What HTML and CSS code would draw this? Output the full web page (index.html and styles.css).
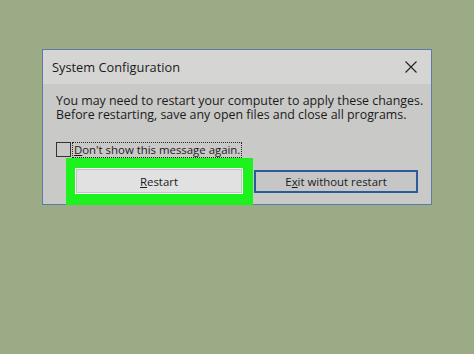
FILE: index.html
```html
<!DOCTYPE html>
<html lang="en">

<head>
    <meta charset="UTF-8">
    <meta name="viewport" content="width=device-width, initial-scale=1.0">
    <title>System Configuration</title>
    <link rel="stylesheet" href="styles.css">
</head>

<body>
    <div class="dialog">
        <div class="titlebar">
            <span class="title">System Configuration</span>
            <svg class="close" width="12" height="12" viewBox="0 0 12 12">
                <path d="M0.5 0.5 L11.5 11.5 M11.5 0.5 L0.5 11.5" stroke="#222" stroke-width="1.1" fill="none" />
            </svg>
        </div>

        <div class="content">
            <p class="message">You may need to restart your computer to apply these changes.</p>
            <p class="message">Before restarting, save any open files and close all programs.</p>

            <label class="check-row">
                <span class="checkbox"></span>
                <span class="check-label"><u>D</u>on't show this message again.</span>
            </label>

            <div class="buttons">
                <div class="highlight">
                    <button class="btn btn-primary"><u>R</u>estart</button>
                </div>
                <button class="btn btn-focus">E<u>x</u>it without restart</button>
            </div>
        </div>
    </div>
</body>

</html>
```

FILE: styles.css
```css
body {
    margin: 0;
    background-color: #9bab86;
    font-family: 'Open Sans', 'Noto Sans', sans-serif;
    color: #1b1b1b;
}

.dialog {
    width: 388px;
    height: 154px;
    margin: 49px 0 0 42px;
    border: 1px solid #5b7cab;
    background-color: #c9c9c7;
    display: flex;
    flex-direction: column;
}

.titlebar {
    height: 34px;
    flex-shrink: 0;
    background-color: #d5d5d3;
    display: flex;
    align-items: center;
    justify-content: space-between;
    padding: 0 14px 0 9px;
}

.title {
    font-size: 12.8px;
}

.close {
    display: block;
}

.content {
    flex: 1;
    min-height: 0;
    padding: 10px 13px 0 13px;
    display: flex;
    flex-direction: column;
}

.message {
    margin: 0;
    font-size: 12.4px;
    line-height: 14px;
    height: 14px;
    white-space: nowrap;
}

.check-row {
    display: flex;
    align-items: center;
    margin-top: 20px;
    font-size: 11.4px;
    white-space: nowrap;
}

.checkbox {
    width: 13px;
    height: 13px;
    border: 1px solid #333;
    margin-right: 2px;
}

.check-label {
    outline: 1px dotted #222;
    padding: 0 1px;
    line-height: 14px;
}

.buttons {
    display: flex;
    align-items: center;
    margin: 1px 0 -1px 10px;
    flex: 1;
}

.highlight {
    background-color: #1ef21e;
    align-self: stretch;
    width: 168px;
    padding: 10px 10px 0 9px;
}

.btn {
    font-family: inherit;
    font-size: 11.4px;
    color: #1b1b1b;
    margin: 0;
    padding: 0;
    white-space: nowrap;
    cursor: pointer;
}

.btn-primary {
    width: 168px;
    height: 26px;
    background-color: #e1e1e1;
    border: 1px solid #f6f6f6;
    box-shadow: inset 0 0 0 1px #c4c4c4;
}

.btn-focus {
    width: 165px;
    height: 23px;
    margin-left: 1px;
    background-color: #c6c6c6;
    border: 2px solid #2d5a98;
}
```
